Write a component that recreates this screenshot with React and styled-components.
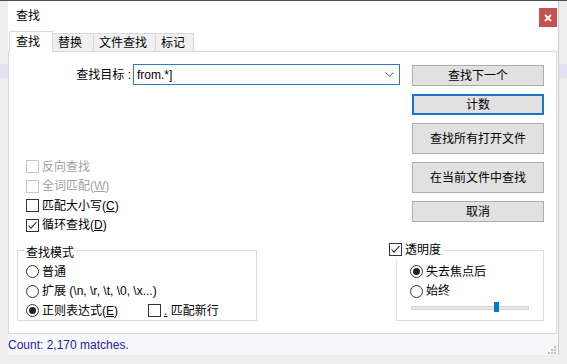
import React from "react";
import styled, { createGlobalStyle } from "styled-components";

const GlobalStyle = createGlobalStyle`
  html, body {
    margin: 0;
    padding: 0;
  }

  body {
    width: 567px;
    height: 364px;
    overflow: hidden;
    font-family: "Liberation Sans", "Noto Sans CJK SC", sans-serif;
    font-size: 12px;
    color: #000;
  }
`;

const tabs = [
  { label: "查找", width: 44, active: true },
  { label: "替换", width: 41 },
  { label: "文件查找", width: 62 },
  { label: "标记", width: 38 },
];

const buttons = [
  { label: "查找下一个" },
  { label: "计数", focused: true },
  { label: "查找所有打开文件", tall: true },
  { label: "在当前文件中查找", tall: true },
  { label: "取消" },
];

const CheckMark = () => (
  <svg width="11" height="11" viewBox="0 0 11 11">
    <polyline
      points="1.5,5.5 4,8.2 9.5,2"
      fill="none"
      stroke="#222"
      strokeWidth="1.1"
    />
  </svg>
);

const CheckBox = ({ checked, disabled, children }) => (
  <OptionRow $disabled={disabled}>
    <Box $disabled={disabled}>{checked && <CheckMark />}</Box>
    <OptionText>{children}</OptionText>
  </OptionRow>
);

const Radio = ({ checked, children }) => (
  <OptionRow>
    <Circle>{checked && <Dot />}</Circle>
    <OptionText>{children}</OptionText>
  </OptionRow>
);

const App = () => {
  return (
    <Desktop>
      <GlobalStyle />
      <Window>
        <TitleBar>
          <span>查找</span>
          <CloseButton>
            <svg width="8" height="8" viewBox="0 0 8 8">
              <path d="M1 1 L7 7 M7 1 L1 7" stroke="#fff" strokeWidth="1.8" />
            </svg>
          </CloseButton>
        </TitleBar>

        <TabStrip>
          {tabs.map((t) => (
            <Tab key={t.label} $active={t.active} $width={t.width}>
              {t.label}
            </Tab>
          ))}
        </TabStrip>

        <Panel>
          <TopArea>
            <LeftTop>
              <SearchRow>
                <SearchLabel>查找目标 :</SearchLabel>
                <Combo>
                  <span>from.*]</span>
                  <svg width="9" height="5" viewBox="0 0 9 5">
                    <polyline
                      points="0.5,0.5 4.5,4.3 8.5,0.5"
                      fill="none"
                      stroke="#555"
                      strokeWidth="1"
                    />
                  </svg>
                </Combo>
              </SearchRow>

              <CheckList>
                <CheckBox disabled>反向查找</CheckBox>
                <CheckBox disabled>
                  全词匹配(<U>W</U>)
                </CheckBox>
                <CheckBox>
                  匹配大小写(<U>C</U>)
                </CheckBox>
                <CheckBox checked>
                  循环查找(<U>D</U>)
                </CheckBox>
              </CheckList>
            </LeftTop>

            <ButtonColumn>
              {buttons.map((b) => (
                <Button key={b.label} $tall={b.tall} $focused={b.focused}>
                  {b.label}
                </Button>
              ))}
            </ButtonColumn>
          </TopArea>

          <BottomArea>
            <Group $width={240} $left={8} $padLeft={8}>
              <GroupTitle>查找模式</GroupTitle>
              <Radio>普通</Radio>
              <Radio>{"扩展 (\\n, \\r, \\t, \\0, \\x...)"}</Radio>
              <InlineRow>
                <RegexCell>
                  <Radio checked>
                    正则表达式(<U>E</U>)
                  </Radio>
                </RegexCell>
                <CheckBox>
                  <U>.</U> 匹配新行
                </CheckBox>
              </InlineRow>
            </Group>

            <Group $width={148} $left={139} $padLeft={13}>
              <GroupHeader>
                <CheckBox checked>透明度</CheckBox>
              </GroupHeader>
              <Radio checked>失去焦点后</Radio>
              <Radio>始终</Radio>
              <Slider>
                <Track />
                <Thumb style={{ left: `${Math.round(0.7 * 118)}px` }} />
              </Slider>
            </Group>
          </BottomArea>
        </Panel>

        <StatusBar>
          <StatusText>Count: 2,170 matches.</StatusText>
          <Grip>
            <svg width="12" height="10" viewBox="0 0 12 10">
              <g fill="#c2c2c2">
                <rect x="9" y="1" width="2" height="2" />
                <rect x="6" y="4" width="2" height="2" />
                <rect x="9" y="4" width="2" height="2" />
                <rect x="3" y="7" width="2" height="2" />
                <rect x="6" y="7" width="2" height="2" />
                <rect x="9" y="7" width="2" height="2" />
              </g>
            </svg>
          </Grip>
        </StatusBar>
      </Window>
    </Desktop>
  );
};

export default App;

const Desktop = styled.div`
  width: 567px;
  height: 364px;
  box-sizing: border-box;
  border-top: 1px solid #4d4d4d;
  padding-left: 8px;
  background: linear-gradient(
    to bottom,
    #eeeeee 63px,
    #e1e1f1 63px,
    #e1e1f1 77px,
    #eeeeee 77px
  );
`;

const Window = styled.div`
  width: 551px;
  height: 354px;
  box-sizing: border-box;
  background: #fff;
  border-right: 1px solid #cdcdcd;
  display: flex;
  flex-direction: column;
`;

const TitleBar = styled.div`
  height: 30px;
  flex: none;
  display: flex;
  justify-content: space-between;
  align-items: center;
  padding-left: 8px;
  line-height: 14px;
`;

const CloseButton = styled.div`
  width: 18px;
  height: 19px;
  align-self: flex-start;
  margin-top: 7px;
  margin-right: 1px;
  background: #c75050;
  display: flex;
  align-items: center;
  justify-content: center;
`;

const TabStrip = styled.div`
  height: 20px;
  flex: none;
  display: flex;
  align-items: flex-start;
  padding-left: 1px;
  position: relative;
  z-index: 1;
`;

const Tab = styled.div`
  width: ${(p) => p.$width}px;
  height: ${(p) => (p.$active ? 21 : 18)}px;
  margin-top: ${(p) => (p.$active ? 0 : 2)}px;
  box-sizing: border-box;
  border-top: 1px solid #d9d9d9;
  border-right: 1px solid #d9d9d9;
  border-left: ${(p) => (p.$active ? "1px solid #d9d9d9" : "none")};
  background: ${(p) => (p.$active ? "#fff" : "#f0f0f0")};
  padding-left: ${(p) => (p.$active ? 6 : 5)}px;
  display: flex;
  align-items: center;
  line-height: 14px;
  white-space: nowrap;
`;

const Panel = styled.div`
  width: 549px;
  height: 283px;
  flex: none;
  box-sizing: border-box;
  border: 1px solid #d9d9d9;
  background: #fff;
`;

const TopArea = styled.div`
  display: flex;
  align-items: flex-start;
`;

const LeftTop = styled.div`
  width: 391px;
  flex: none;
`;

const SearchRow = styled.div`
  margin-top: 12px;
  height: 21px;
  display: flex;
  align-items: center;
`;

const SearchLabel = styled.div`
  width: 124px;
  box-sizing: border-box;
  padding-right: 2px;
  text-align: right;
  line-height: 14px;
  white-space: nowrap;
`;

const Combo = styled.div`
  width: 267px;
  height: 21px;
  box-sizing: border-box;
  border: 1px solid #2f78c4;
  display: flex;
  align-items: center;
  justify-content: space-between;
  padding: 0 5px 0 3px;
  line-height: 14px;
`;

const CheckList = styled.div`
  margin-top: 72px;
  padding-left: 17px;
`;

const OptionRow = styled.div`
  height: 19.5px;
  display: flex;
  align-items: center;
  color: ${(p) => (p.$disabled ? "#a2a2a2" : "#000")};
  white-space: nowrap;
`;

const Box = styled.span`
  width: 13px;
  height: 13px;
  flex: none;
  box-sizing: border-box;
  border: 1px solid ${(p) => (p.$disabled ? "#c6c6c6" : "#333")};
  background: #fff;
  display: flex;
  align-items: center;
  justify-content: center;
`;

const Circle = styled.span`
  width: 13px;
  height: 13px;
  flex: none;
  box-sizing: border-box;
  border: 1px solid #333;
  border-radius: 50%;
  background: #fff;
  display: flex;
  align-items: center;
  justify-content: center;
`;

const Dot = styled.span`
  width: 7px;
  height: 7px;
  border-radius: 50%;
  background: #222;
`;

const OptionText = styled.span`
  margin-left: 3px;
  line-height: 14px;
`;

const U = styled.span`
  text-decoration: underline;
`;

const ButtonColumn = styled.div`
  width: 132px;
  margin-left: 12px;
  margin-top: 13px;
  display: flex;
  flex-direction: column;
  gap: 8px;
`;

const Button = styled.div`
  height: ${(p) => (p.$tall ? 31 : 21)}px;
  box-sizing: border-box;
  border: ${(p) => (p.$focused ? "2px solid #1a74cc" : "1px solid #adadad")};
  background: #e1e1e1;
  display: flex;
  align-items: center;
  justify-content: center;
  line-height: 14px;
`;

const BottomArea = styled.div`
  margin-top: 15px;
  display: flex;
  align-items: flex-start;
`;

const Group = styled.div`
  position: relative;
  width: ${(p) => p.$width}px;
  height: 71px;
  margin-left: ${(p) => p.$left}px;
  box-sizing: border-box;
  border: 1px solid #dcdcdc;
  padding: 11px 0 0 ${(p) => p.$padLeft}px;
`;

const GroupTitle = styled.div`
  position: absolute;
  top: -5px;
  left: 7px;
  padding: 0 1px;
  background: #fff;
  line-height: 14px;
`;

const GroupHeader = styled.div`
  position: absolute;
  top: -11px;
  left: -8px;
  padding-right: 2px;
  background: #fff;
`;

const InlineRow = styled.div`
  display: flex;
`;

const RegexCell = styled.div`
  width: 122px;
  flex: none;
`;

const Slider = styled.div`
  position: relative;
  width: 118px;
  height: 10px;
  margin: 1px 0 0 1px;
  padding-top: 4px;
  box-sizing: border-box;
`;

const Track = styled.div`
  height: 4px;
  box-sizing: border-box;
  border: 1px solid #d6d6d6;
  background: #e7e7e7;
`;

const Thumb = styled.div`
  position: absolute;
  top: 0;
  width: 5px;
  height: 10px;
  background: #0078d7;
`;

const StatusBar = styled.div`
  flex: 1;
  display: flex;
  justify-content: space-between;
  align-items: center;
  background: #f7f7f9;
`;

const StatusText = styled.span`
  font-family: "Liberation Sans", sans-serif;
  font-size: 12px;
  line-height: 14px;
  color: #2424a8;
`;

const Grip = styled.div`
  align-self: flex-end;
  margin-right: 1px;
  line-height: 0;
`;
